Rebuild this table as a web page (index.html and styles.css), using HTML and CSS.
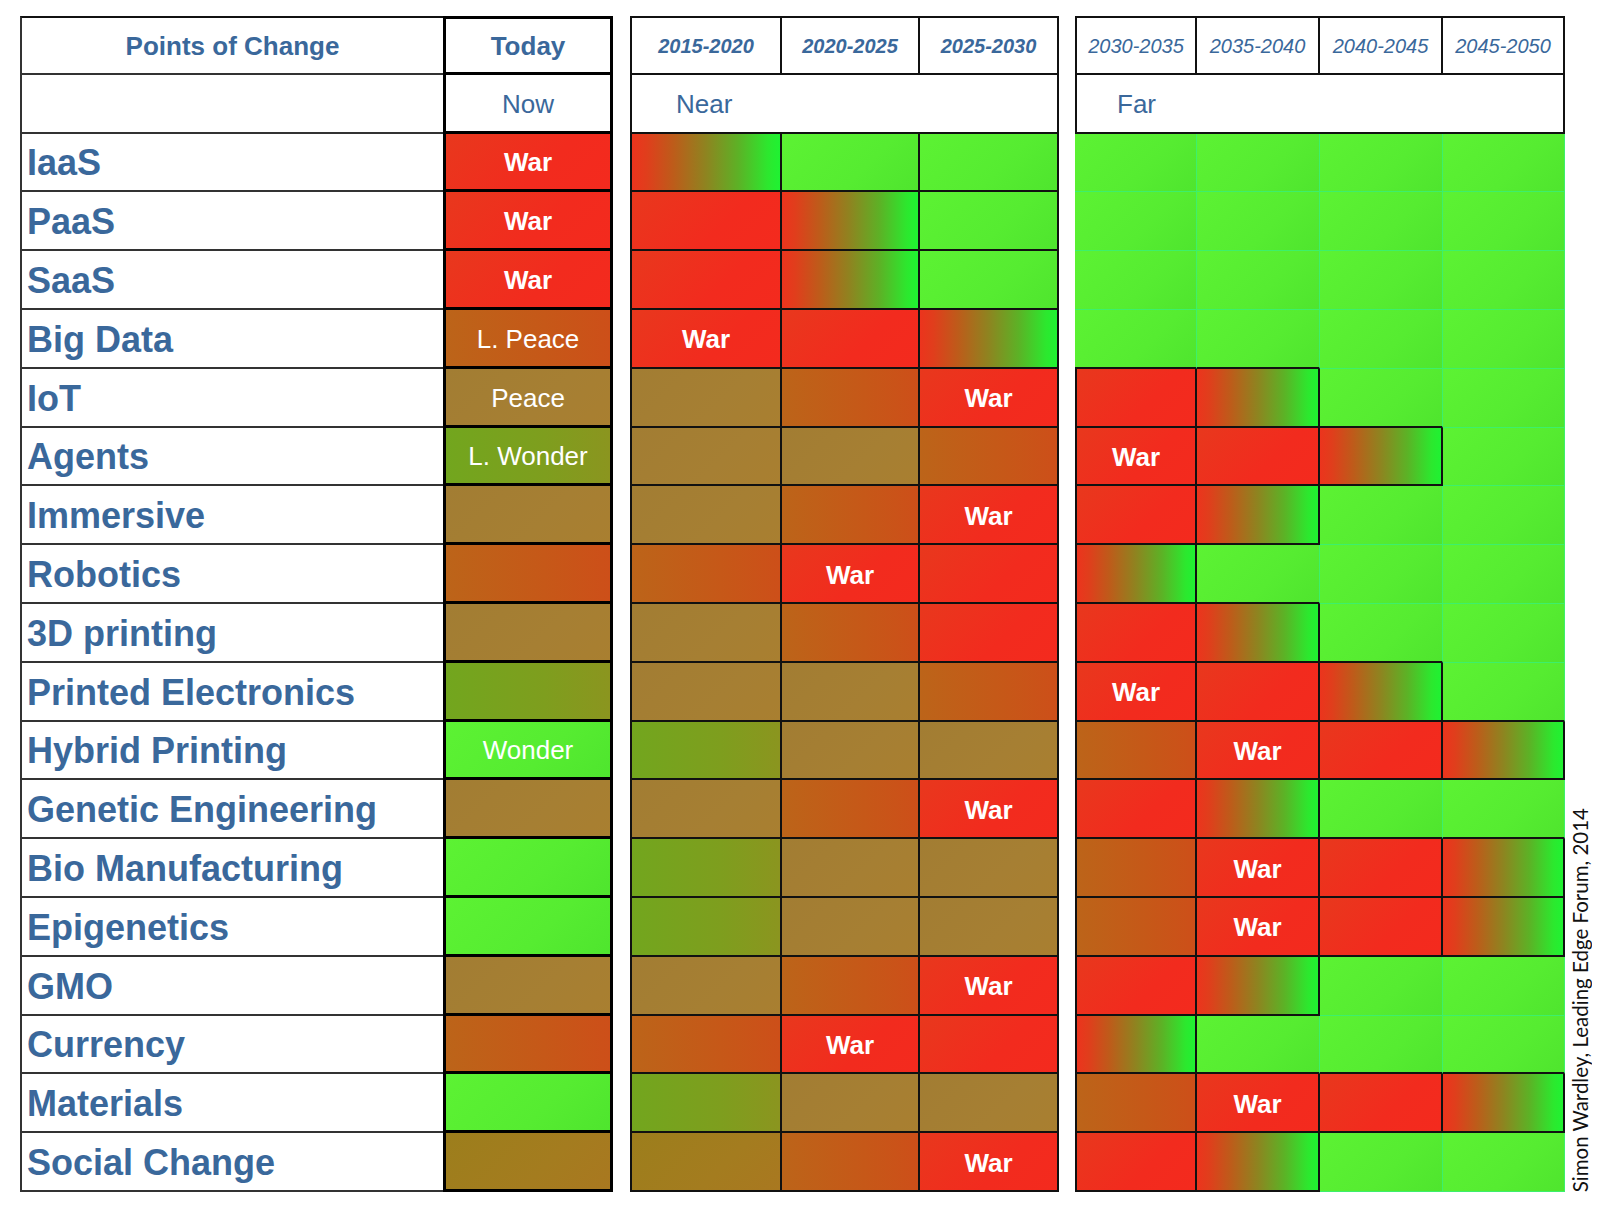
FILE: index.html
```html
<!DOCTYPE html>
<html>
<head>
<meta charset="utf-8">
<title>Points of Change</title>
<link rel="stylesheet" href="styles.css">
</head>
<body>
<div class="chart">
  <div class="grid blk-a">
    <div class="lbl hd top">Points of Change</div>
    <div class="today hd top">Today</div>
    <div class="lbl"></div>
    <div class="today now">Now</div>

    <div class="lbl">IaaS</div><div class="today r"><span class="war">War</span></div>
    <div class="lbl">PaaS</div><div class="today r"><span class="war">War</span></div>
    <div class="lbl">SaaS</div><div class="today r"><span class="war">War</span></div>
    <div class="lbl">Big Data</div><div class="today o"><span class="st">L. Peace</span></div>
    <div class="lbl">IoT</div><div class="today b"><span class="st">Peace</span></div>
    <div class="lbl">Agents</div><div class="today ol"><span class="st">L. Wonder</span></div>
    <div class="lbl">Immersive</div><div class="today b"></div>
    <div class="lbl">Robotics</div><div class="today o"></div>
    <div class="lbl">3D printing</div><div class="today b"></div>
    <div class="lbl">Printed Electronics</div><div class="today ol"></div>
    <div class="lbl">Hybrid Printing</div><div class="today g"><span class="st">Wonder</span></div>
    <div class="lbl">Genetic Engineering</div><div class="today b"></div>
    <div class="lbl">Bio Manufacturing</div><div class="today g"></div>
    <div class="lbl">Epigenetics</div><div class="today g"></div>
    <div class="lbl">GMO</div><div class="today b"></div>
    <div class="lbl">Currency</div><div class="today o"></div>
    <div class="lbl">Materials</div><div class="today g"></div>
    <div class="lbl">Social Change</div><div class="today b2"></div>
  </div>

  <div class="grid blk-near">
    <div class="n c1 top hd yr yb">2015-2020</div>
    <div class="n top hd yr yb">2020-2025</div>
    <div class="n top hd yr yb">2025-2030</div>
    <div class="n c1 hd span3">Near</div>

    <div class="n c1 t"></div><div class="n g"></div><div class="n g"></div>
    <div class="n c1 r"></div><div class="n t"></div><div class="n g"></div>
    <div class="n c1 r"></div><div class="n t"></div><div class="n g"></div>
    <div class="n c1 r"><span class="war">War</span></div><div class="n r"></div><div class="n t"></div>
    <div class="n c1 b"></div><div class="n o"></div><div class="n r"><span class="war">War</span></div>
    <div class="n c1 b"></div><div class="n b"></div><div class="n o"></div>
    <div class="n c1 b"></div><div class="n o"></div><div class="n r"><span class="war">War</span></div>
    <div class="n c1 o"></div><div class="n r"><span class="war">War</span></div><div class="n r"></div>
    <div class="n c1 b"></div><div class="n o"></div><div class="n r"></div>
    <div class="n c1 b"></div><div class="n b"></div><div class="n o"></div>
    <div class="n c1 ol"></div><div class="n b"></div><div class="n b"></div>
    <div class="n c1 b"></div><div class="n o"></div><div class="n r"><span class="war">War</span></div>
    <div class="n c1 ol"></div><div class="n b"></div><div class="n b"></div>
    <div class="n c1 ol"></div><div class="n b"></div><div class="n b"></div>
    <div class="n c1 b"></div><div class="n o"></div><div class="n r"><span class="war">War</span></div>
    <div class="n c1 o"></div><div class="n r"><span class="war">War</span></div><div class="n r"></div>
    <div class="n c1 ol"></div><div class="n b"></div><div class="n b"></div>
    <div class="n c1 b2"></div><div class="n o"></div><div class="n r"><span class="war">War</span></div>
  </div>

  <div class="grid blk-far">
    <div class="f c1 top hd yr">2030-2035</div>
    <div class="f top hd yr">2035-2040</div>
    <div class="f top hd yr">2040-2045</div>
    <div class="f top hd yr">2045-2050</div>
    <div class="f c1 hd span4">Far</div>

    <div class="f c1 g xr xb"></div><div class="f g xr xb"></div><div class="f g xr xb"></div><div class="f g xr xb"></div>
    <div class="f c1 g xr xb"></div><div class="f g xr xb"></div><div class="f g xr xb"></div><div class="f g xr xb"></div>
    <div class="f c1 g xr xb"></div><div class="f g xr xb"></div><div class="f g xr xb"></div><div class="f g xr xb"></div>
    <div class="f c1 g xr"></div><div class="f g xr"></div><div class="f g xr xb"></div><div class="f g xr xb"></div>
    <!-- IoT -->
    <div class="f c1 r"></div><div class="f t"></div><div class="f g xr"></div><div class="f g xr xb"></div>
    <!-- Agents -->
    <div class="f c1 r"><span class="war">War</span></div><div class="f r"></div><div class="f t"></div><div class="f g xr xb"></div>
    <!-- Immersive -->
    <div class="f c1 r"></div><div class="f t"></div><div class="f g xr xb"></div><div class="f g xr xb"></div>
    <!-- Robotics -->
    <div class="f c1 t"></div><div class="f g xr"></div><div class="f g xr xb"></div><div class="f g xr xb"></div>
    <!-- 3D printing -->
    <div class="f c1 r"></div><div class="f t"></div><div class="f g xr"></div><div class="f g xr xb"></div>
    <!-- Printed Electronics -->
    <div class="f c1 r"><span class="war">War</span></div><div class="f r"></div><div class="f t"></div><div class="f g xr"></div>
    <!-- Hybrid Printing -->
    <div class="f c1 o"></div><div class="f r"><span class="war">War</span></div><div class="f r"></div><div class="f t"></div>
    <!-- Genetic Engineering -->
    <div class="f c1 r"></div><div class="f t"></div><div class="f g xr"></div><div class="f g xr"></div>
    <!-- Bio Manufacturing -->
    <div class="f c1 o"></div><div class="f r"><span class="war">War</span></div><div class="f r"></div><div class="f t"></div>
    <!-- Epigenetics -->
    <div class="f c1 o"></div><div class="f r"><span class="war">War</span></div><div class="f r"></div><div class="f t"></div>
    <!-- GMO -->
    <div class="f c1 r"></div><div class="f t"></div><div class="f g xr xb"></div><div class="f g xr xb"></div>
    <!-- Currency -->
    <div class="f c1 t"></div><div class="f g xr"></div><div class="f g xr"></div><div class="f g xr"></div>
    <!-- Materials -->
    <div class="f c1 o"></div><div class="f r"><span class="war">War</span></div><div class="f r"></div><div class="f t"></div>
    <!-- Social Change -->
    <div class="f c1 r"></div><div class="f t"></div><div class="f g xr xb"></div><div class="f g xr xb"></div>
  </div>

  <div class="credit">Simon Wardley, Leading Edge Forum, 2014</div>
</div>
</body>
</html>
```

FILE: styles.css
```css
* {
  box-sizing: border-box;
  margin: 0;
  padding: 0;
}

body {
  background: #ffffff;
  font-family: "Liberation Sans", Arial, Helvetica, sans-serif;
  width: 1600px;
  height: 1205px;
  overflow: hidden;
}

.chart {
  display: flex;
  align-items: flex-start;
  padding: 16px 0 0 20px;
}

.grid {
  display: grid;
  grid-template-rows: repeat(20, 58.8px);
}

.blk-a {
  grid-template-columns: 423px 170px;
}

.blk-near {
  grid-template-columns: 152px 138px 139px;
  margin-left: 17px;
}

.blk-far {
  grid-template-columns: 122px 123px 123px 122px;
  margin-left: 16px;
}

.grid > div {
  display: flex;
  align-items: center;
  justify-content: center;
  overflow: hidden;
  white-space: nowrap;
  padding-top: 3px;
}

/* label column */
.lbl {
  justify-content: flex-start !important;
  padding-left: 5px;
  color: #3a689b;
  font-weight: bold;
  font-size: 36px;
  border-left: 2px solid #333;
  border-bottom: 2px solid #333;
  background: #fff;
}

.lbl.hd {
  justify-content: center !important;
  font-size: 26px;
  padding-left: 0;
}

.top {
  border-top: 2px solid #111;
}

/* today column */
.today {
  border-left: 3px solid #000;
  border-right: 3px solid #000;
  border-bottom: 3px solid #000;
  background: #fff;
}

.today.top {
  border-top: 3px solid #000;
}

.today.hd {
  color: #3a689b;
  font-weight: bold;
  font-size: 26px;
}

.today.now {
  color: #3a689b;
  font-size: 26px;
}

/* header cells */
.hd {
  background: #fff;
  color: #3a689b;
}

.yr {
  font-size: 20px;
  font-style: italic;
}

.yb {
  font-weight: bold;
}

.span3 {
  grid-column: span 3;
  justify-content: flex-start !important;
  padding-left: 44px;
  font-size: 26px;
}

.span4 {
  grid-column: span 4;
  justify-content: flex-start !important;
  padding-left: 40px;
  font-size: 26px;
}

/* near cells */
.n {
  border-right: 2px solid #111;
  border-bottom: 2px solid #111;
}

.n.c1 {
  border-left: 2px solid #111;
}

/* far cells */
.f {
  border-right: 2px solid #111;
  border-bottom: 2px solid #111;
}

.f.c1 {
  border-left: 2px solid #111;
}

.f.c1.g {
  border-left: 0;
}

.f.xr {
  border-right: 1px solid #3cf06c;
}

.f.xb {
  border-bottom: 1px solid #3cf06c;
}

/* fills */
.r {
  background: linear-gradient(135deg, #e8381d 0%, #f22b1e 60%, #f42a1e 100%);
}

.g {
  background: linear-gradient(135deg, #5cf233 0%, #56ec31 60%, #4fe52e 100%);
}

.b {
  background: linear-gradient(135deg, #a27d33 0%, #a67f33 60%, #a97f30 100%);
}

.b2 {
  background: linear-gradient(135deg, #9c7e1c 0%, #a47c1f 60%, #a97820 100%);
}

.o {
  background: linear-gradient(to right, #bc6419 0%, #c65818 60%, #cd4f19 100%);
}

.ol {
  background: linear-gradient(to right, #72a61e 0%, #7e9e1e 60%, #8b951f 100%);
}

.t {
  background: linear-gradient(to right, #ec341d 0%, #e03e1c 10%, #bd5c1a 28%, #8e8420 50%, #5cb226 72%, #2ce82e 92%, #1ff232 100%);
}

/* cell texts */
.war {
  color: #fff;
  font-weight: bold;
  font-size: 26px;
}

.st {
  color: #fff;
  font-size: 26px;
}

.credit {
  align-self: flex-end;
  writing-mode: vertical-rl;
  transform: rotate(180deg);
  font-family: Lato, "Open Sans", sans-serif;
  font-size: 20.5px;
  line-height: 24px;
  color: #111;
  margin-left: 3px;
  margin-bottom: 0;
  white-space: nowrap;
}
```
